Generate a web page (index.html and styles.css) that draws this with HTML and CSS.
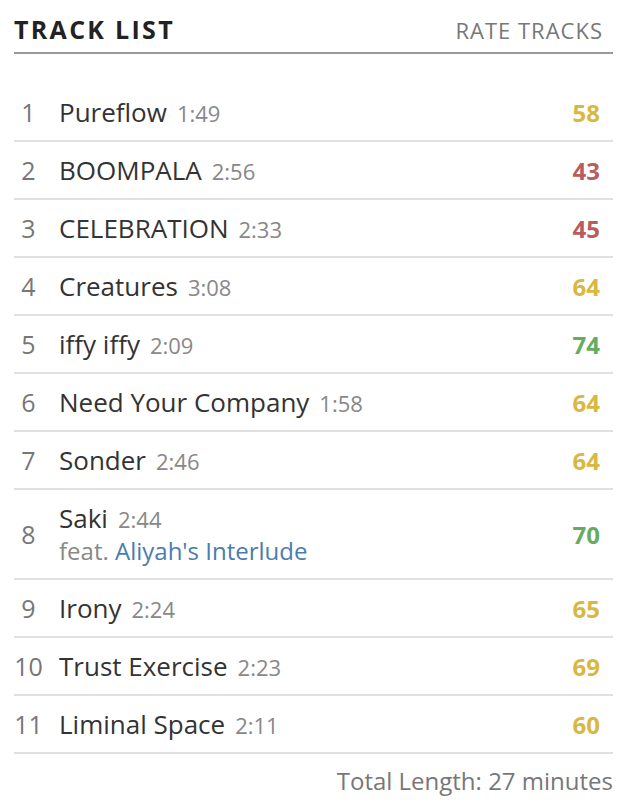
FILE: index.html
```html
<!DOCTYPE html>
<html>
<head>
<meta charset="utf-8">
<link rel="stylesheet" href="styles.css">
</head>
<body>
<div class="tracklist">
  <div class="header">
    <h2 class="title">TRACK LIST</h2>
    <span class="rate">RATE TRACKS</span>
  </div>
  <ol class="tracks">
    <li class="track"><span class="num">1</span><div class="info"><div class="line"><span class="name">Pureflow</span><span class="len">1:49</span></div></div><span class="score yellow">58</span></li>
    <li class="track"><span class="num">2</span><div class="info"><div class="line"><span class="name">BOOMPALA</span><span class="len">2:56</span></div></div><span class="score red">43</span></li>
    <li class="track"><span class="num">3</span><div class="info"><div class="line"><span class="name">CELEBRATION</span><span class="len">2:33</span></div></div><span class="score red">45</span></li>
    <li class="track"><span class="num">4</span><div class="info"><div class="line"><span class="name">Creatures</span><span class="len">3:08</span></div></div><span class="score yellow">64</span></li>
    <li class="track"><span class="num">5</span><div class="info"><div class="line"><span class="name">iffy iffy</span><span class="len">2:09</span></div></div><span class="score green">74</span></li>
    <li class="track"><span class="num">6</span><div class="info"><div class="line"><span class="name">Need Your Company</span><span class="len">1:58</span></div></div><span class="score yellow">64</span></li>
    <li class="track"><span class="num">7</span><div class="info"><div class="line"><span class="name">Sonder</span><span class="len">2:46</span></div></div><span class="score yellow">64</span></li>
    <li class="track tall"><span class="num">8</span><div class="info"><div class="line"><span class="name">Saki</span><span class="len">2:44</span></div><div class="feat">feat. <a class="artist" href="#">Aliyah's Interlude</a></div></div><span class="score green">70</span></li>
    <li class="track"><span class="num">9</span><div class="info"><div class="line"><span class="name">Irony</span><span class="len">2:24</span></div></div><span class="score yellow">65</span></li>
    <li class="track"><span class="num">10</span><div class="info"><div class="line"><span class="name">Trust Exercise</span><span class="len">2:23</span></div></div><span class="score yellow">69</span></li>
    <li class="track"><span class="num">11</span><div class="info"><div class="line"><span class="name">Liminal Space</span><span class="len">2:11</span></div></div><span class="score yellow">60</span></li>
  </ol>
  <div class="total">Total Length: 27 minutes</div>
</div>
</body>
</html>
```
FILE: styles.css
```css
html, body {
  margin: 0;
  padding: 0;
  background: #fff;
}
body {
  font-family: "Open Sans", "Liberation Sans", sans-serif;
}
.tracklist {
  width: 599px;
  margin-left: 14px;
}
.header {
  display: flex;
  justify-content: space-between;
  align-items: baseline;
  border-bottom: 2px solid #999;
  height: 54px;
  box-sizing: border-box;
  padding-top: 13px;
}
.title {
  margin: 0;
  font-size: 25px;
  font-weight: 700;
  letter-spacing: 2.3px;
  color: #222;
  line-height: 32px;
}
.rate {
  font-size: 22px;
  letter-spacing: 1px;
  color: #777;
  margin-right: 10px;
}
.tracks {
  list-style: none;
  margin: 30px 0 0;
  padding: 0;
}
.track {
  display: flex;
  align-items: center;
  height: 58px;
  box-sizing: border-box;
  border-bottom: 2px solid #e0e0e0;
}
.track.tall {
  height: 90px;
}
.num {
  width: 29px;
  text-align: center;
  font-size: 25px;
  color: #777;
  margin-right: 16px;
}
.info {
  flex: 1;
}
.line {
  display: flex;
  align-items: baseline;
}
.name {
  font-size: 26px;
  color: #333;
  line-height: 34px;
}
.len {
  font-size: 22px;
  color: #888;
  margin-left: 10px;
}
.feat {
  font-size: 24px;
  color: #888;
  line-height: 32px;
}
.artist {
  color: #4a7cb0;
  text-decoration: none;
}
.score {
  font-size: 24px;
  font-weight: 700;
  margin-right: 13px;
}
.yellow { color: #d8b840; }
.red { color: #b85c5c; }
.green { color: #66ac5f; }
.total {
  text-align: right;
  font-size: 24px;
  color: #777;
  margin-top: 10px;
}
```
